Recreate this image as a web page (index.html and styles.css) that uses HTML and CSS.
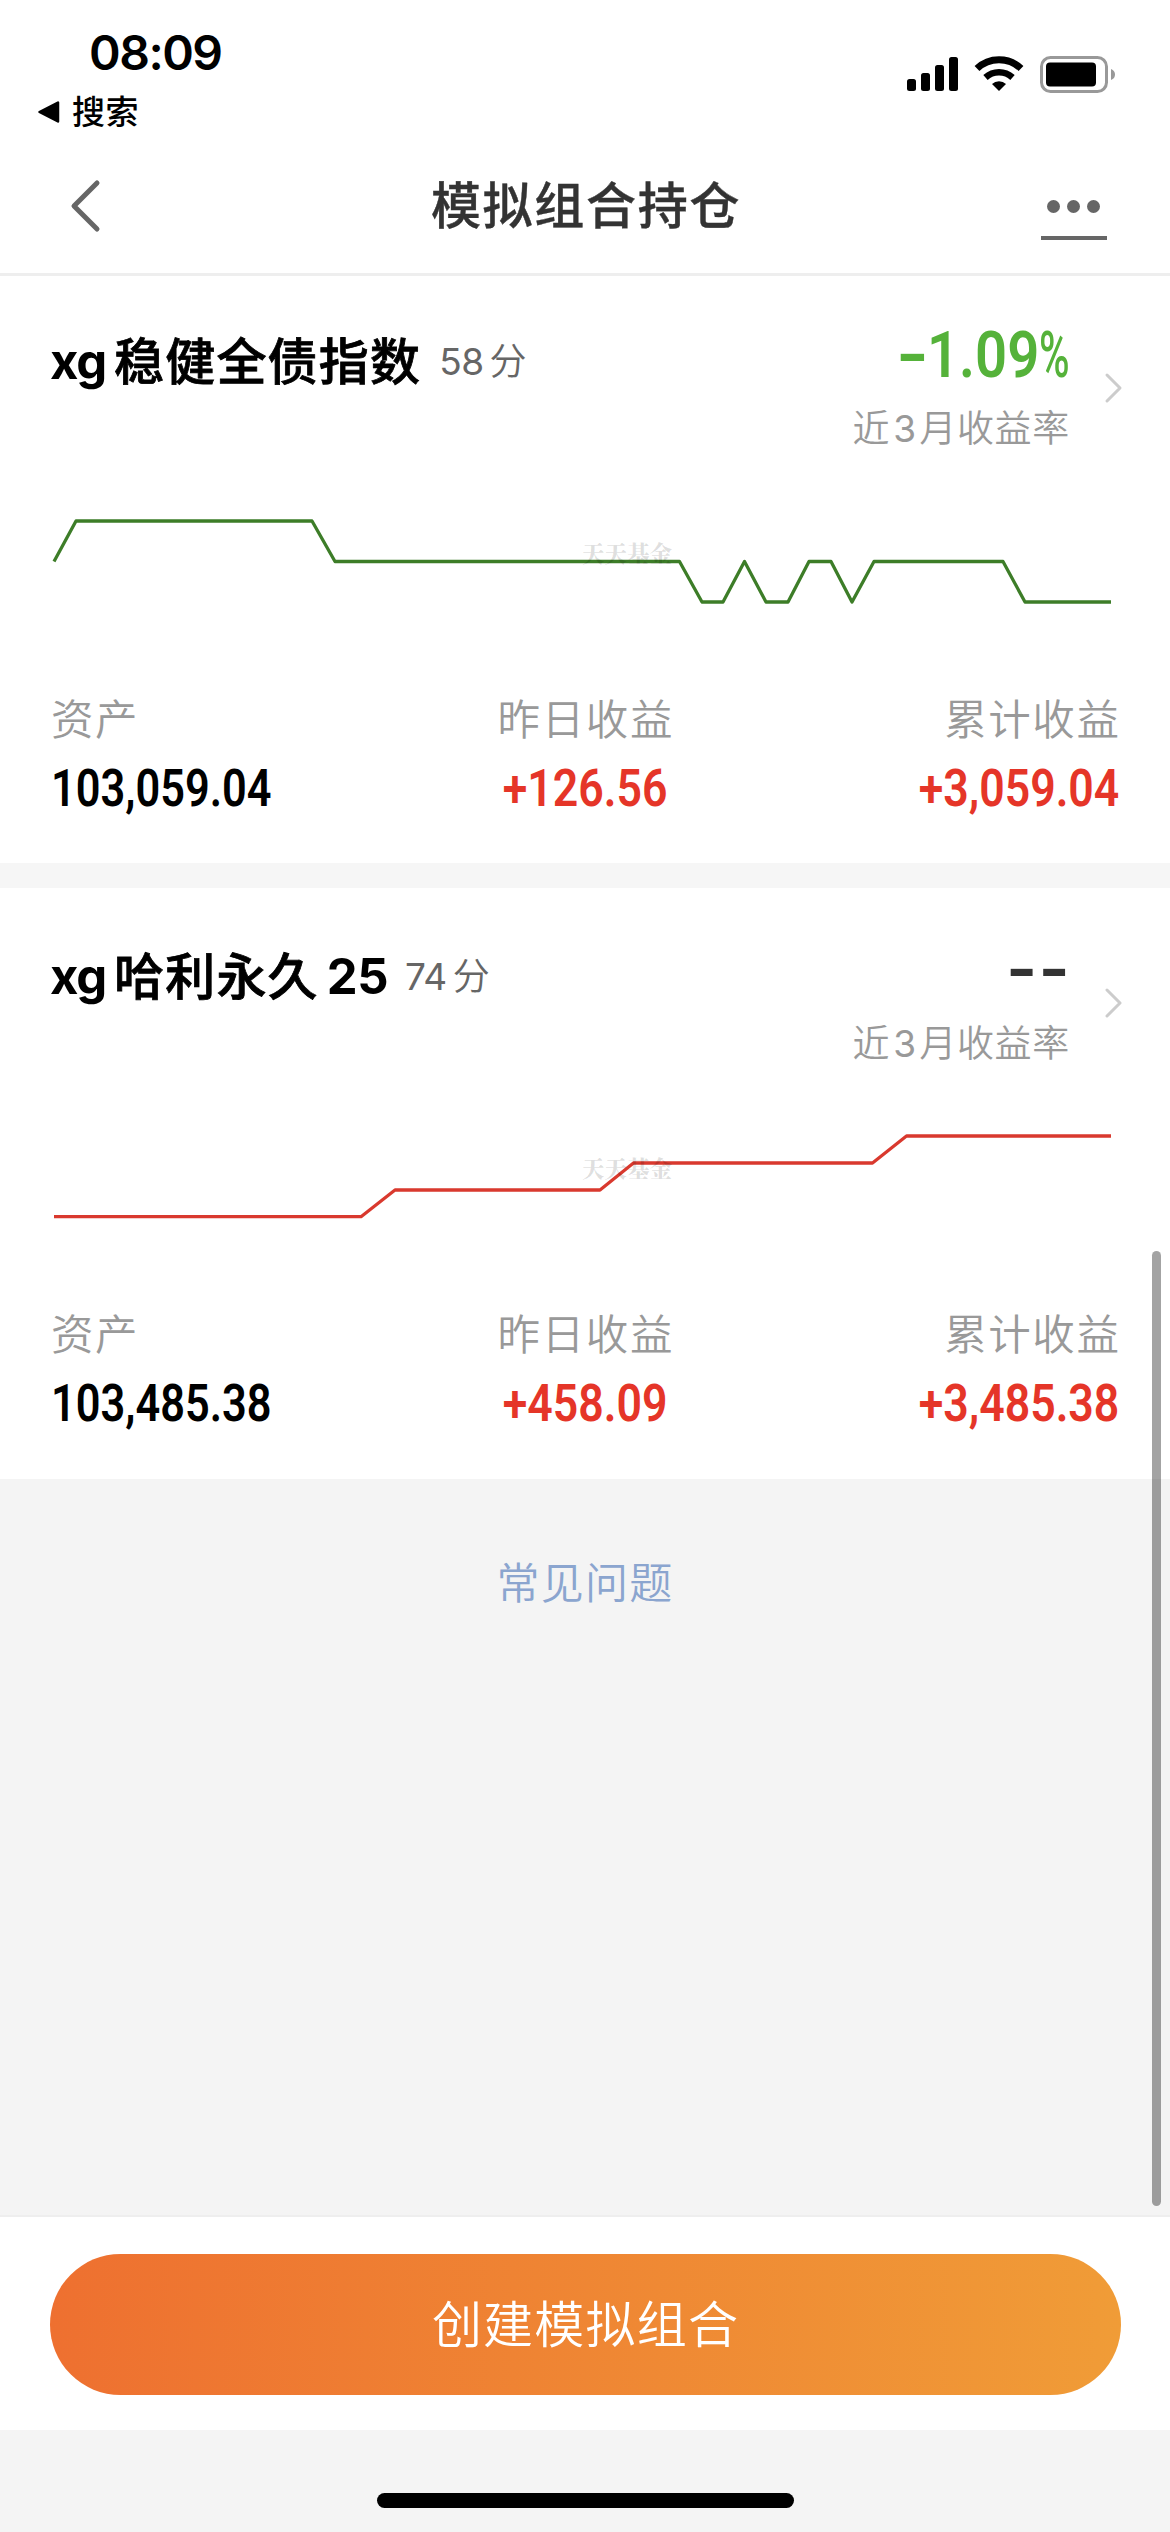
FILE: index.html
```html
<!DOCTYPE html>
<html lang="zh-CN">
<head>
<meta charset="utf-8">
<title>模拟组合持仓</title>
<link rel="stylesheet" href="styles.css">
</head>
<body>
<div class="screen">
  <header class="status">
    <div class="status-left">
      <div class="clock">08:09</div>
      <div class="return">
        <svg width="22" height="22" viewBox="0 0 22 22"><path d="M20 1.5V20.500L1.500 11Z" stroke="#000" stroke-width="2.500" stroke-linejoin="round"/></svg>
        <span>搜索</span>
      </div>
    </div>
    <div class="status-right">
      <svg width="51" height="36" viewBox="0 0 51 36">
        <rect x="0" y="24" width="9" height="12" rx="2.500"/><rect x="14" y="18" width="9" height="18" rx="2.500"/>
        <rect x="28" y="10" width="9" height="26" rx="2.500"/><rect x="42" y="2" width="9" height="34" rx="2.500"/>
      </svg>
      <svg class="wifi" width="50" height="36" viewBox="0 0 50 36">
        <path d="M3 13.500A32 32 0 0 1 47 13.500" fill="none" stroke="#000" stroke-width="7"/>
        <path d="M11.500 22.500A20 20 0 0 1 38.500 22.500" fill="none" stroke="#000" stroke-width="6.500"/>
        <path d="M25 36L18 29A10 10 0 0 1 32 29Z"/>
      </svg>
      <svg class="battery" width="76" height="37" viewBox="0 0 76 37">
        <rect x="1.500" y="1.500" width="65" height="34" rx="9" fill="none" stroke="#999" stroke-width="3"/>
        <rect x="6" y="6.500" width="50" height="24" rx="4"/>
        <path d="M71 13Q75 14.500 75 18.500T71 24Z" fill="#999"/>
      </svg>
    </div>
  </header>

  <nav class="nav">
    <svg width="32" height="56" viewBox="0 0 32 56"><path d="M28 5L5 28L28 51" fill="none" stroke="#666" stroke-width="5" stroke-linecap="round" stroke-linejoin="round"/></svg>
    <h1>模拟组合持仓</h1>
    <div class="more"><i></i><i></i><i></i></div>
  </nav>

  <main class="list">
    <section class="card">
      <div class="card-head">
        <div class="name"><b>xg</b><span class="cn">稳健全债指数</span><span class="score">58</span><span class="score-unit">分</span></div>
        <div class="rate">
          <div class="rate-value down"><span class="sign">-</span><span class="digits">1.09</span><span class="percent">%</span></div>
          <div class="rate-label">近<em>3</em>月收益率</div>
        </div>
        <svg class="go" width="19" height="32" viewBox="0 0 19 32"><path d="M3 3L16 16L3 29" fill="none" stroke="#ccc" stroke-width="3" stroke-linecap="round" stroke-linejoin="round"/></svg>
      </div>
      <div class="chart">
        <svg width="1066" height="110" viewBox="0 0 1066 110"><polyline fill="none" stroke="#3d7d28" stroke-width="3.300" stroke-linejoin="round" points="2,55.5 24,15 260,15 283,55.5 627.500,55.5 650,96 671,96 692.500,55.5 714,96 736,96 757,55.5 779,55.5 800,96 822,55.5 951,55.5 973,96 1059,96"/></svg>
        <span class="mark">天天基金</span>
      </div>
      <div class="stats">
        <div><label>资产</label><p class="num"><span>103,059.04</span></p></div>
        <div><label>昨日收益</label><p class="num up"><span>+126.56</span></p></div>
        <div><label>累计收益</label><p class="num up"><span>+3,059.04</span></p></div>
      </div>
    </section>

    <section class="card">
      <div class="card-head">
        <div class="name"><b>xg</b><span class="cn">哈利永久</span><b class="tail">25</b><span class="score">74</span><span class="score-unit">分</span></div>
        <div class="rate">
          <div class="rate-value none"><span>--</span></div>
          <div class="rate-label">近<em>3</em>月收益率</div>
        </div>
        <svg class="go" width="19" height="32" viewBox="0 0 19 32"><path d="M3 3L16 16L3 29" fill="none" stroke="#ccc" stroke-width="3" stroke-linecap="round" stroke-linejoin="round"/></svg>
      </div>
      <div class="chart">
        <svg width="1066" height="110" viewBox="0 0 1066 110"><polyline fill="none" stroke="#d9392e" stroke-width="3.300" stroke-linejoin="round" points="2,95.700 309,95.700 343,69 548,69 581.500,42 820.500,42 854.500,15 1059,15"/></svg>
        <span class="mark">天天基金</span>
      </div>
      <div class="stats">
        <div><label>资产</label><p class="num"><span>103,485.38</span></p></div>
        <div><label>昨日收益</label><p class="num up"><span>+458.09</span></p></div>
        <div><label>累计收益</label><p class="num up"><span>+3,485.38</span></p></div>
      </div>
    </section>

    <a class="faq">常见问题</a>
  </main>

  <footer class="action"><button>创建模拟组合</button></footer>
  <div class="home"><i></i></div>
  <div class="scrollbar"></div>
</div>
</body>
</html>
```

FILE: styles.css
```css
* { box-sizing: border-box; margin: 0; padding: 0; }
body { background: #f4f4f4; font-family: Inter, "Noto Sans CJK SC", sans-serif; }
.screen { position: relative; width: 1170px; height: 2532px; display: flex; flex-direction: column; overflow: hidden; }
svg { display: block; flex: none; }

.status { height: 150px; background: #fff; display: flex; justify-content: space-between; flex: none; }
.status-left { padding: 23px 0 0 38px; }
.clock { font-size: 48px; line-height: 60px; font-weight: 600; padding-left: 51px; letter-spacing: -1.5px; white-space: nowrap; }
.return { display: flex; align-items: center; height: 50px; margin-top: 3px; font-size: 33px; font-weight: 500; line-height: 50px; }
.return span { margin-left: 12px; letter-spacing: .6px; margin-top: 1px; }
.return svg { margin-top: 2px; }
.status-right { display: flex; align-items: flex-start; padding: 55px 54px 0 0; }
.wifi { margin-left: 16px; }
.battery { margin-left: 16px; margin-top: 1px; }

.nav { height: 126px; background: #fff; border-bottom: 3px solid #eee; display: flex; align-items: flex-start; justify-content: space-between; padding: 0 63px 0 69px; flex: none; position: relative; z-index: 1; }
.nav > svg { margin-top: 28px; }
.nav h1 { font-size: 50px; line-height: 70px; font-weight: 500; letter-spacing: 1.7px; color: #333; margin: 21px 0 0 30px; -webkit-text-stroke: .4px #333; }
.more { width: 66px; height: 43px; margin-top: 47px; border-bottom: 4px solid #666; display: flex; justify-content: center; gap: 7px; padding-top: 3px; }
.more i { width: 13px; height: 13px; border-radius: 50%; background: #666; }

.list { flex: 1; display: flex; flex-direction: column; margin-top: -3px; }
.card { height: 590px; background: #fff; padding: 53px 50px 0; flex: none; }
.card + .card { height: 616px; border-top: 25px solid #f6f6f6; }
.card-head { display: flex; align-items: flex-start; height: 180px; }
.name { display: flex; flex: 1; height: 70px; line-height: 70px; margin-top: 1px; white-space: nowrap; font-size: 50px; color: #000; }
.name b { font-weight: 700; letter-spacing: -1.2px; font-size: 49px; }
.name .cn { font-weight: 500; letter-spacing: 1.2px; margin-left: 8px; -webkit-text-stroke: .8px #000; }
.name .tail { margin-left: 8px; letter-spacing: -.5px; }
.score, .score-unit { font-size: 37px; color: #666; }
.score { margin-left: 18px; letter-spacing: -.5px; }
.score-unit { margin-left: 6px; font-weight: 350; }
.name .tail + .score { margin-left: 17px; }
.rate { display: flex; flex-direction: column; align-items: flex-end; margin-right: 34px; }
.rate-value { display: flex; font: 500 65px/60px Roboto, sans-serif; height: 60px; margin-top: -1px; }
.rate-value span, .num span { display: inline-block; transform: scaleX(.865); transform-origin: left; }
.rate-value .sign { width: 31px; transform: scaleX(1.3); font-weight: 700; }
.rate-value .digits { width: 112px; font-weight: 600; }
.rate-value .percent { width: 31px; transform: scaleX(.64); }
.down { color: #55b23a; }
.none { color: #333; }
.rate-value.none span { letter-spacing: 1px; margin-right: -1px; transform: scaleX(1.22); transform-origin: right; font-weight: 700; }
.rate-label { font-size: 37px; line-height: 56px; font-weight: 350; letter-spacing: .7px; color: #999; margin-top: 16px; }
.rate-label em { font-style: normal; font-weight: 400; margin: 0 2.5px 0 3px; }
.go { margin: 46px -3px 0 0; }

.chart { position: relative; height: 110px; margin: 0 2px; }
.mark { position: absolute; left: 530px; top: 33px; font: 900 22.500px/26px "Noto Serif CJK SC", "Noto Sans CJK SC", serif; color: rgba(0,0,0,.13); white-space: nowrap; }

.stats { display: grid; grid-template-columns: 1fr 1fr 1fr; padding-top: 74px; }
.stats div { text-align: center; }
.stats div:first-child { text-align: left; }
.stats div:last-child { text-align: right; }
.stats label { display: block; font-size: 42.500px; line-height: 60px; font-weight: 350; letter-spacing: 1.6px; color: #999; margin-right: -1.6px; padding: 0 1px; }
.num { font: 600 51px/60px Roboto, sans-serif; margin-top: 9px; color: #000; padding: 0 1px; }
.num.up span { transform: scaleX(.875); transform-origin: right; }
.stats div:nth-child(2) .num span { transform-origin: center; }
.stats div:first-child .num span { transform: scaleX(.85); }
.num.up { color: #e53528; }

.faq { display: block; text-align: center; margin-top: 74px; font-size: 43px; line-height: 60px; font-weight: 350; letter-spacing: 1.3px; color: #8ba5cf; }

.action { height: 215px; border-top: 2px solid #eee; background: #fff; padding: 37px 49px 0 50px; flex: none; }
.action button { display: block; width: 100%; height: 141px; border: 0; border-radius: 71px; background: linear-gradient(90deg, #ee7030, #f09c37); color: #fff; font: 350 50px/70px Inter, "Noto Sans CJK SC", sans-serif; letter-spacing: 1.200px; }
.home { height: 102px; padding-top: 63px; flex: none; }
.home i { display: block; width: 417px; height: 15px; border-radius: 8px; background: #000; margin: 0 auto; }
.scrollbar { position: absolute; z-index: 2; left: 1152px; top: 1251px; width: 9px; height: 955px; border-radius: 5px; background: rgba(0,0,0,.36); }
```
